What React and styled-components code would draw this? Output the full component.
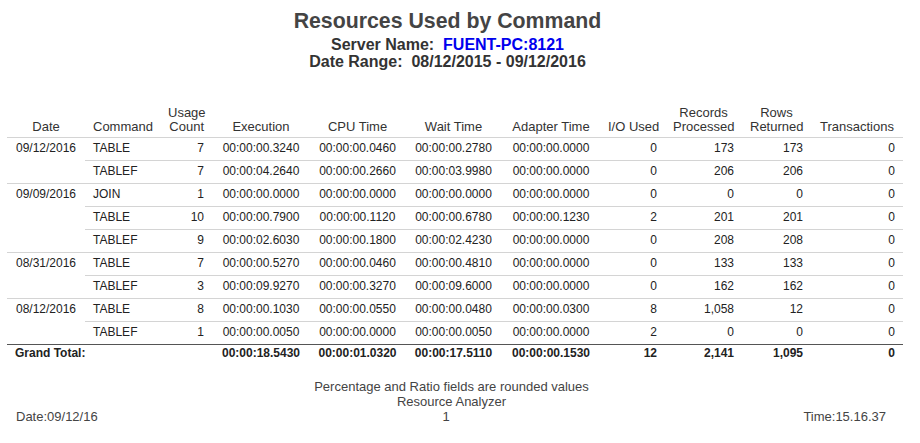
import React from "react";
import styled, { createGlobalStyle } from "styled-components";

const GlobalStyle = createGlobalStyle`
  html, body {
    margin: 0;
    padding: 0;
    background: #ffffff;
  }
  body {
    font-family: "Liberation Sans", Arial, sans-serif;
  }
`;

const groups = [
  {
    date: "09/12/2016",
    rows: [
      ["TABLE", 7, "00:00:00.3240", "00:00:00.0460", "00:00:00.2780", "00:00:00.0000", 0, "173", "173", 0],
      ["TABLEF", 7, "00:00:04.2640", "00:00:00.2660", "00:00:03.9980", "00:00:00.0000", 0, "206", "206", 0],
    ],
  },
  {
    date: "09/09/2016",
    rows: [
      ["JOIN", 1, "00:00:00.0000", "00:00:00.0000", "00:00:00.0000", "00:00:00.0000", 0, "0", "0", 0],
      ["TABLE", 10, "00:00:00.7900", "00:00:00.1120", "00:00:00.6780", "00:00:00.1230", 2, "201", "201", 0],
      ["TABLEF", 9, "00:00:02.6030", "00:00:00.1800", "00:00:02.4230", "00:00:00.0000", 0, "208", "208", 0],
    ],
  },
  {
    date: "08/31/2016",
    rows: [
      ["TABLE", 7, "00:00:00.5270", "00:00:00.0460", "00:00:00.4810", "00:00:00.0000", 0, "133", "133", 0],
      ["TABLEF", 3, "00:00:09.9270", "00:00:00.3270", "00:00:09.6000", "00:00:00.0000", 0, "162", "162", 0],
    ],
  },
  {
    date: "08/12/2016",
    rows: [
      ["TABLE", 8, "00:00:00.1030", "00:00:00.0550", "00:00:00.0480", "00:00:00.0300", 8, "1,058", "12", 0],
      ["TABLEF", 1, "00:00:00.0050", "00:00:00.0000", "00:00:00.0050", "00:00:00.0000", 2, "0", "0", 0],
    ],
  },
];

// column widths + alignment of the data cells
const columns = [
  { width: 78, align: "center" },
  { width: 75, align: "left" },
  { width: 52, align: "right" },
  { width: 98, align: "center" },
  { width: 95, align: "center" },
  { width: 97, align: "center" },
  { width: 98, align: "center" },
  { width: 65, align: "right" },
  { width: 77, align: "right" },
  { width: 69, align: "right" },
  { width: 92, align: "right" },
];

const Page = styled.div`
  width: 920px;
  padding-top: 9px;
  color: #333;
`;

const TitleBlock = styled.div`
  width: 895px;
  text-align: center;
`;

const Title = styled.div`
  font-size: 21.3px;
  font-weight: bold;
  line-height: 24px;
  color: #444;
  margin-bottom: 3px;
`;

const SubTitle = styled.div`
  font-size: 16px;
  font-weight: bold;
  line-height: 17px;
  color: #333;
  white-space: pre;
`;

const Server = styled.span`
  color: #0000ee;
`;

const Report = styled.table`
  margin: 36px 0 0 7px;
  width: 896px;
  table-layout: fixed;
  border-collapse: collapse;
  font-size: 12px;
  line-height: 14px;
`;

const HeadCell = styled.th`
  font-size: 13px;
  font-weight: normal;
  color: #333;
  vertical-align: bottom;
  text-align: ${(p) => p.$align || "center"};
  padding: 0 8px 3px;
  border-bottom: 1px solid #d4d4d4;
  white-space: nowrap;
`;

const Cell = styled.td`
  color: #222;
  text-align: ${(p) => p.$align};
  vertical-align: top;
  padding: 3px 8px 5px;
  white-space: nowrap;
  border-bottom: ${(p) => (p.$last ? "none" : "1px solid #d4d4d4")};
`;

const TotalCell = styled.td`
  color: #222;
  font-weight: bold;
  text-align: ${(p) => p.$align};
  padding: 1px 8px 3px;
  white-space: nowrap;
  border-top: 1px solid #555;
`;

const Notes = styled.div`
  margin-top: 16px;
  width: 903px;
  text-align: center;
  font-size: 13px;
  line-height: 15px;
  color: #444;
`;

const FooterRow = styled.div`
  display: grid;
  grid-template-columns: 1fr auto 1fr;
  padding: 0 34px 0 16px;
  font-size: 13px;
  line-height: 15px;
  color: #444;
`;

const FootLeft = styled.div`
  text-align: left;
`;

const FootPage = styled.div`
  padding-right: 10px;
`;

const FootRight = styled.div`
  text-align: right;
`;

const Header = () => (
  <thead>
    <tr>
      <HeadCell>Date</HeadCell>
      <HeadCell $align="left">Command</HeadCell>
      <HeadCell $align="right">
        Usage
        <br />
        Count
      </HeadCell>
      <HeadCell>Execution</HeadCell>
      <HeadCell>CPU Time</HeadCell>
      <HeadCell>Wait Time</HeadCell>
      <HeadCell>Adapter Time</HeadCell>
      <HeadCell>I/O Used</HeadCell>
      <HeadCell>
        Records
        <br />
        Processed
      </HeadCell>
      <HeadCell>
        Rows
        <br />
        Returned
      </HeadCell>
      <HeadCell>Transactions</HeadCell>
    </tr>
  </thead>
);

const App = () => {
  const totals = ["00:00:18.5430", "00:00:01.0320", "00:00:17.5110", "00:00:00.1530", "12", "2,141", "1,095", "0"];

  return (
    <Page>
      <GlobalStyle />
      <TitleBlock>
        <Title>Resources Used by Command</Title>
        <SubTitle>
          {"Server Name:  "}
          <Server>FUENT-PC:8121</Server>
        </SubTitle>
        <SubTitle>{"Date Range:  08/12/2015 - 09/12/2016"}</SubTitle>
      </TitleBlock>

      <Report>
        <colgroup>
          {columns.map((c, i) => (
            <col key={i} style={{ width: c.width }} />
          ))}
        </colgroup>
        <Header />
        <tbody>
          {groups.map((g, gi) => {
            const lastGroup = gi === groups.length - 1;
            return g.rows.map((r, ri) => {
              const last = lastGroup && ri === g.rows.length - 1;
              return (
                <tr key={g.date + ri}>
                  {ri === 0 && (
                    <Cell $align="center" rowSpan={g.rows.length} $last={lastGroup}>
                      {g.date}
                    </Cell>
                  )}
                  {r.map((v, ci) => (
                    <Cell key={ci} $align={columns[ci + 1].align} $last={last}>
                      {v}
                    </Cell>
                  ))}
                </tr>
              );
            });
          })}
          <tr>
            <TotalCell colSpan={3} $align="left">
              Grand Total:
            </TotalCell>
            {totals.map((t, i) => (
              <TotalCell key={i} $align={columns[i + 3].align}>
                {t}
              </TotalCell>
            ))}
          </tr>
        </tbody>
      </Report>

      <Notes>
        Percentage and Ratio fields are rounded values
        <br />
        Resource Analyzer
      </Notes>
      <FooterRow>
        <FootLeft>Date:09/12/16</FootLeft>
        <FootPage>1</FootPage>
        <FootRight>Time:15.16.37</FootRight>
      </FooterRow>
    </Page>
  );
};

export default App;
